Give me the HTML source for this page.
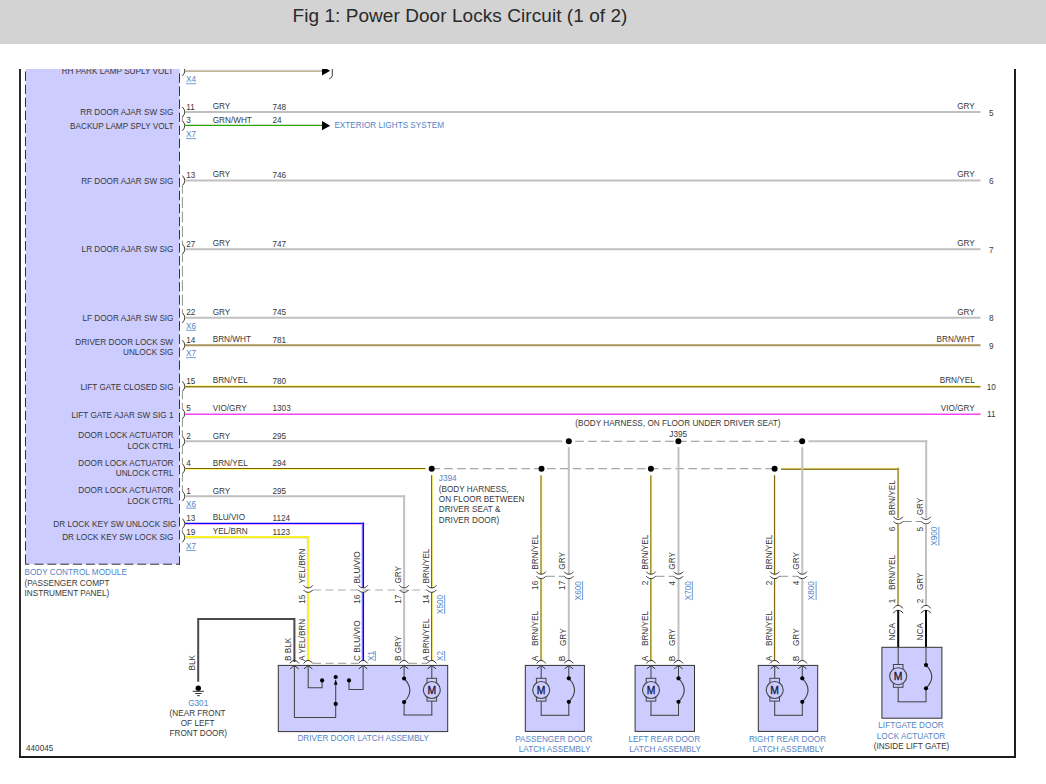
<!DOCTYPE html>
<html lang="en"><head><meta charset="utf-8">
<title>Fig 1: Power Door Locks Circuit (1 of 2)</title>
<style>
html,body{margin:0;padding:0;background:#fff;}
body{width:1046px;height:784px;position:relative;overflow:hidden;font-family:"Liberation Sans",Arial,sans-serif;}
#hdr{position:absolute;left:0;top:0;width:1046px;height:44px;background:#d3d3d3;}
#ttl{position:absolute;left:292.5px;top:3.5px;margin:0;font-weight:normal;font-size:19px;line-height:24px;color:#2a2a2a;white-space:nowrap;letter-spacing:0.06px;}
svg{position:absolute;left:0;top:0;}
svg text{font-family:"Liberation Sans",Arial,sans-serif;}
</style></head>
<body>
<div id="hdr"><h1 id="ttl">Fig 1: Power Door Locks Circuit (1 of 2)</h1></div>
<svg width="1046" height="784" viewBox="0 0 1046 784">
<defs><clipPath id="clipTop"><rect x="0" y="69" width="1046" height="715"/></clipPath></defs>
<g clip-path="url(#clipTop)">
<line x1="20.00" y1="69.00" x2="20.00" y2="758.00" stroke="#2a2a2a" stroke-width="2"/>
<line x1="1015.00" y1="69.00" x2="1015.00" y2="758.00" stroke="#1e1e1e" stroke-width="2"/>
<line x1="19.00" y1="757.00" x2="1016.00" y2="757.00" stroke="#1e1e1e" stroke-width="2"/>
<rect x="25.8" y="60" width="153.9" height="504.3" fill="#ccccff"/>
<line x1="25.50" y1="71.50" x2="25.50" y2="564.70" stroke="#333" stroke-width="1" stroke-dasharray="9.4 3.65"/>
<line x1="179.50" y1="73.40" x2="179.50" y2="564.70" stroke="#333" stroke-width="1" stroke-dasharray="9.4 3.65"/>
<line x1="25.00" y1="564.20" x2="29.10" y2="564.20" stroke="#333" stroke-width="1"/>
<line x1="34.50" y1="564.20" x2="180.00" y2="564.20" stroke="#333" stroke-width="1" stroke-dasharray="8.9 3.96"/>
<text x="173.50" y="115.10" text-anchor="end" fill="#383838" font-size="8.2">RR DOOR AJAR SW SIG</text>
<path d="M182.4,107.00 Q187.2,112.00 182.4,117.00" stroke="#3a3a3a" stroke-width="1" fill="none"/>
<text x="186.30" y="109.50" text-anchor="start" fill="#383838" font-size="8.2">11</text>
<text x="212.70" y="108.80" text-anchor="start" fill="#383838" font-size="8.2">GRY</text>
<text x="272.50" y="109.60" text-anchor="start" fill="#383838" font-size="8.2">748</text>
<text x="173.50" y="128.82" text-anchor="end" fill="#383838" font-size="8.2">BACKUP LAMP SPLY VOLT</text>
<path d="M182.4,120.72 Q187.2,125.72 182.4,130.72" stroke="#3a3a3a" stroke-width="1" fill="none"/>
<text x="186.30" y="123.22" text-anchor="start" fill="#383838" font-size="8.2">3</text>
<text x="212.70" y="122.52" text-anchor="start" fill="#383838" font-size="8.2">GRN/WHT</text>
<text x="272.50" y="123.32" text-anchor="start" fill="#383838" font-size="8.2">24</text>
<text x="173.50" y="183.70" text-anchor="end" fill="#383838" font-size="8.2">RF DOOR AJAR SW SIG</text>
<path d="M182.4,175.60 Q187.2,180.60 182.4,185.60" stroke="#3a3a3a" stroke-width="1" fill="none"/>
<text x="186.30" y="178.10" text-anchor="start" fill="#383838" font-size="8.2">13</text>
<text x="212.70" y="177.40" text-anchor="start" fill="#383838" font-size="8.2">GRY</text>
<text x="272.50" y="178.20" text-anchor="start" fill="#383838" font-size="8.2">746</text>
<text x="173.50" y="252.30" text-anchor="end" fill="#383838" font-size="8.2">LR DOOR AJAR SW SIG</text>
<path d="M182.4,244.20 Q187.2,249.20 182.4,254.20" stroke="#3a3a3a" stroke-width="1" fill="none"/>
<text x="186.30" y="246.70" text-anchor="start" fill="#383838" font-size="8.2">27</text>
<text x="212.70" y="246.00" text-anchor="start" fill="#383838" font-size="8.2">GRY</text>
<text x="272.50" y="246.80" text-anchor="start" fill="#383838" font-size="8.2">747</text>
<text x="173.50" y="320.90" text-anchor="end" fill="#383838" font-size="8.2">LF DOOR AJAR SW SIG</text>
<path d="M182.4,312.80 Q187.2,317.80 182.4,322.80" stroke="#3a3a3a" stroke-width="1" fill="none"/>
<text x="186.30" y="315.30" text-anchor="start" fill="#383838" font-size="8.2">22</text>
<text x="212.70" y="314.60" text-anchor="start" fill="#383838" font-size="8.2">GRY</text>
<text x="272.50" y="315.40" text-anchor="start" fill="#383838" font-size="8.2">745</text>
<text x="173.10" y="344.84" text-anchor="end" fill="#383838" font-size="8.2">DRIVER DOOR LOCK SW</text>
<text x="173.50" y="354.94" text-anchor="end" fill="#383838" font-size="8.2">UNLOCK SIG</text>
<path d="M182.4,340.24 Q187.2,345.24 182.4,350.24" stroke="#3a3a3a" stroke-width="1" fill="none"/>
<text x="186.30" y="342.74" text-anchor="start" fill="#383838" font-size="8.2">14</text>
<text x="212.70" y="342.04" text-anchor="start" fill="#383838" font-size="8.2">BRN/WHT</text>
<text x="272.50" y="342.84" text-anchor="start" fill="#383838" font-size="8.2">781</text>
<text x="173.50" y="389.50" text-anchor="end" fill="#383838" font-size="8.2">LIFT GATE CLOSED SIG</text>
<path d="M182.4,381.40 Q187.2,386.40 182.4,391.40" stroke="#3a3a3a" stroke-width="1" fill="none"/>
<text x="186.30" y="383.90" text-anchor="start" fill="#383838" font-size="8.2">15</text>
<text x="212.70" y="383.20" text-anchor="start" fill="#383838" font-size="8.2">BRN/YEL</text>
<text x="272.50" y="384.00" text-anchor="start" fill="#383838" font-size="8.2">780</text>
<text x="173.50" y="417.84" text-anchor="end" fill="#383838" font-size="8.2">LIFT GATE AJAR SW SIG 1</text>
<path d="M182.4,408.84 Q187.2,413.84 182.4,418.84" stroke="#3a3a3a" stroke-width="1" fill="none"/>
<text x="186.30" y="411.34" text-anchor="start" fill="#383838" font-size="8.2">5</text>
<text x="212.70" y="410.64" text-anchor="start" fill="#383838" font-size="8.2">VIO/GRY</text>
<text x="272.50" y="411.44" text-anchor="start" fill="#383838" font-size="8.2">1303</text>
<text x="173.50" y="438.28" text-anchor="end" fill="#383838" font-size="8.2">DOOR LOCK ACTUATOR</text>
<text x="173.50" y="448.68" text-anchor="end" fill="#383838" font-size="8.2">LOCK CTRL</text>
<path d="M182.4,436.28 Q187.2,441.28 182.4,446.28" stroke="#3a3a3a" stroke-width="1" fill="none"/>
<text x="186.30" y="438.78" text-anchor="start" fill="#383838" font-size="8.2">2</text>
<text x="212.70" y="438.78" text-anchor="start" fill="#383838" font-size="8.2">GRY</text>
<text x="272.50" y="438.88" text-anchor="start" fill="#383838" font-size="8.2">295</text>
<text x="173.50" y="465.72" text-anchor="end" fill="#383838" font-size="8.2">DOOR LOCK ACTUATOR</text>
<text x="173.50" y="476.12" text-anchor="end" fill="#383838" font-size="8.2">UNLOCK CTRL</text>
<path d="M182.4,463.72 Q187.2,468.72 182.4,473.72" stroke="#3a3a3a" stroke-width="1" fill="none"/>
<text x="186.30" y="466.22" text-anchor="start" fill="#383838" font-size="8.2">4</text>
<text x="212.70" y="465.52" text-anchor="start" fill="#383838" font-size="8.2">BRN/YEL</text>
<text x="272.50" y="466.32" text-anchor="start" fill="#383838" font-size="8.2">294</text>
<text x="173.50" y="493.16" text-anchor="end" fill="#383838" font-size="8.2">DOOR LOCK ACTUATOR</text>
<text x="173.50" y="503.56" text-anchor="end" fill="#383838" font-size="8.2">LOCK CTRL</text>
<path d="M182.4,491.16 Q187.2,496.16 182.4,501.16" stroke="#3a3a3a" stroke-width="1" fill="none"/>
<text x="186.30" y="493.66" text-anchor="start" fill="#383838" font-size="8.2">1</text>
<text x="212.70" y="493.66" text-anchor="start" fill="#383838" font-size="8.2">GRY</text>
<text x="272.50" y="493.76" text-anchor="start" fill="#383838" font-size="8.2">295</text>
<text x="176.50" y="526.70" text-anchor="end" fill="#383838" font-size="8.2">DR LOCK KEY SW UNLOCK SIG</text>
<path d="M182.4,518.60 Q187.2,523.60 182.4,528.60" stroke="#3a3a3a" stroke-width="1" fill="none"/>
<text x="186.30" y="521.10" text-anchor="start" fill="#383838" font-size="8.2">13</text>
<text x="212.70" y="520.40" text-anchor="start" fill="#383838" font-size="8.2">BLU/VIO</text>
<text x="272.50" y="521.20" text-anchor="start" fill="#383838" font-size="8.2">1124</text>
<text x="173.50" y="540.42" text-anchor="end" fill="#383838" font-size="8.2">DR LOCK KEY SW LOCK SIG</text>
<path d="M182.4,532.32 Q187.2,537.32 182.4,542.32" stroke="#3a3a3a" stroke-width="1" fill="none"/>
<text x="186.30" y="534.82" text-anchor="start" fill="#383838" font-size="8.2">19</text>
<text x="212.70" y="534.12" text-anchor="start" fill="#383838" font-size="8.2">YEL/BRN</text>
<text x="272.50" y="534.92" text-anchor="start" fill="#383838" font-size="8.2">1123</text>
<text x="173.30" y="73.94" text-anchor="end" fill="#383838" font-size="8.2">RH PARK LAMP SUPLY VOLT</text>
<path d="M182.4,65.84 Q187.2,70.84 182.4,75.84" stroke="#3a3a3a" stroke-width="1" fill="none"/>
<line x1="185.00" y1="70.34" x2="323.00" y2="70.34" stroke="#c9c9c9" stroke-width="1.0"/>
<line x1="185.00" y1="71.34" x2="323.00" y2="71.34" stroke="#b9a57e" stroke-width="1.0"/>
<polygon points="322,66.24 330.2,70.84 322,75.44" fill="#000"/>
<path d="M332.3,67.84 L332.3,75.84 Q332,77.84 329.3,78.84" stroke="#3a3a3a" stroke-width="1" fill="none"/>
<line x1="182.40" y1="185.60" x2="182.40" y2="244.20" stroke="#777" stroke-width="0.8" stroke-dasharray="11 3.5" stroke-dashoffset="3"/>
<line x1="182.40" y1="254.20" x2="182.40" y2="312.80" stroke="#777" stroke-width="0.8" stroke-dasharray="11 3.5" stroke-dashoffset="3"/>
<line x1="182.40" y1="391.40" x2="182.40" y2="408.84" stroke="#777" stroke-width="0.8" stroke-dasharray="11 3.5" stroke-dashoffset="3"/>
<line x1="182.40" y1="418.84" x2="182.40" y2="436.28" stroke="#777" stroke-width="0.8" stroke-dasharray="11 3.5" stroke-dashoffset="3"/>
<line x1="182.40" y1="446.28" x2="182.40" y2="463.72" stroke="#777" stroke-width="0.8" stroke-dasharray="11 3.5" stroke-dashoffset="3"/>
<line x1="182.40" y1="473.72" x2="182.40" y2="491.16" stroke="#777" stroke-width="0.8" stroke-dasharray="11 3.5" stroke-dashoffset="3"/>
<line x1="182.40" y1="117.00" x2="182.40" y2="120.72" stroke="#777" stroke-width="0.8" stroke-dasharray="11 3.5" stroke-dashoffset="3"/>
<line x1="182.40" y1="528.60" x2="182.40" y2="532.32" stroke="#777" stroke-width="0.8" stroke-dasharray="11 3.5" stroke-dashoffset="3"/>
<text x="186.00" y="82.14" text-anchor="start" fill="#5584c6" font-size="8.2">X4</text>
<line x1="186.00" y1="83.74" x2="196.03" y2="83.74" stroke="#6a9fd8" stroke-width="1"/>
<text x="186.00" y="137.02" text-anchor="start" fill="#5584c6" font-size="8.2">X7</text>
<line x1="186.00" y1="138.62" x2="196.03" y2="138.62" stroke="#6a9fd8" stroke-width="1"/>
<text x="186.00" y="328.70" text-anchor="start" fill="#5584c6" font-size="8.2">X6</text>
<line x1="186.00" y1="330.30" x2="196.03" y2="330.30" stroke="#6a9fd8" stroke-width="1"/>
<text x="186.00" y="356.04" text-anchor="start" fill="#5584c6" font-size="8.2">X7</text>
<line x1="186.00" y1="357.64" x2="196.03" y2="357.64" stroke="#6a9fd8" stroke-width="1"/>
<text x="186.00" y="506.56" text-anchor="start" fill="#5584c6" font-size="8.2">X6</text>
<line x1="186.00" y1="508.16" x2="196.03" y2="508.16" stroke="#6a9fd8" stroke-width="1"/>
<text x="186.00" y="548.82" text-anchor="start" fill="#5584c6" font-size="8.2">X7</text>
<line x1="186.00" y1="550.42" x2="196.03" y2="550.42" stroke="#6a9fd8" stroke-width="1"/>
<line x1="185.00" y1="112.00" x2="980.50" y2="112.00" stroke="#c0c0c0" stroke-width="2"/>
<text x="974.80" y="108.80" text-anchor="end" fill="#383838" font-size="8.2">GRY</text>
<text x="991.30" y="115.60" text-anchor="middle" fill="#383838" font-size="8.2">5</text>
<line x1="185.00" y1="180.60" x2="980.50" y2="180.60" stroke="#c0c0c0" stroke-width="2"/>
<text x="974.80" y="177.40" text-anchor="end" fill="#383838" font-size="8.2">GRY</text>
<text x="991.30" y="184.20" text-anchor="middle" fill="#383838" font-size="8.2">6</text>
<line x1="185.00" y1="249.20" x2="980.50" y2="249.20" stroke="#c0c0c0" stroke-width="2"/>
<text x="974.80" y="246.00" text-anchor="end" fill="#383838" font-size="8.2">GRY</text>
<text x="991.30" y="252.80" text-anchor="middle" fill="#383838" font-size="8.2">7</text>
<line x1="185.00" y1="317.80" x2="980.50" y2="317.80" stroke="#c0c0c0" stroke-width="2"/>
<text x="974.80" y="314.60" text-anchor="end" fill="#383838" font-size="8.2">GRY</text>
<text x="991.30" y="321.40" text-anchor="middle" fill="#383838" font-size="8.2">8</text>
<line x1="185.00" y1="345.24" x2="980.50" y2="345.24" stroke="#a8945a" stroke-width="2"/>
<text x="974.80" y="342.04" text-anchor="end" fill="#383838" font-size="8.2">BRN/WHT</text>
<text x="991.30" y="348.84" text-anchor="middle" fill="#383838" font-size="8.2">9</text>
<line x1="185.00" y1="385.50" x2="980.50" y2="385.50" stroke="#ffff90" stroke-width="1.0"/>
<line x1="185.00" y1="386.70" x2="980.50" y2="386.70" stroke="#967c20" stroke-width="1.4"/>
<text x="974.80" y="383.20" text-anchor="end" fill="#383838" font-size="8.2">BRN/YEL</text>
<text x="991.30" y="390.00" text-anchor="middle" fill="#383838" font-size="8.2">10</text>
<line x1="185.00" y1="413.39" x2="980.50" y2="413.39" stroke="#e3c3e3" stroke-width="1.0"/>
<line x1="185.00" y1="414.44" x2="980.50" y2="414.44" stroke="#ff3cff" stroke-width="1.15"/>
<text x="974.80" y="410.64" text-anchor="end" fill="#383838" font-size="8.2">VIO/GRY</text>
<text x="991.30" y="417.44" text-anchor="middle" fill="#383838" font-size="8.2">11</text>
<line x1="185.00" y1="125.42" x2="323.00" y2="125.42" stroke="#2aa506" stroke-width="1.4"/>
<polygon points="322,121.12 330.2,125.72 322,130.32" fill="#000"/>
<text x="334.40" y="128.42" text-anchor="start" fill="#5584c6" font-size="8.2">EXTERIOR LIGHTS SYSTEM</text>
<text x="24.50" y="575.00" text-anchor="start" fill="#5584c6" font-size="8.2">BODY CONTROL MODULE</text>
<text x="24.50" y="586.00" text-anchor="start" fill="#383838" font-size="8.2">(PASSENGER COMPT</text>
<text x="24.50" y="595.80" text-anchor="start" fill="#383838" font-size="8.2">INSTRUMENT PANEL)</text>
<text x="26.00" y="750.60" text-anchor="start" fill="#383838" font-size="8.2">440045</text>
<line x1="185.00" y1="441.28" x2="562.30" y2="441.28" stroke="#c0c0c0" stroke-width="2"/>
<line x1="575.20" y1="441.28" x2="802.20" y2="441.28" stroke="#8c8c8c" stroke-width="0.95" stroke-dasharray="8.6 4.25"/>
<line x1="808.50" y1="441.28" x2="927.20" y2="441.28" stroke="#c0c0c0" stroke-width="2"/>
<line x1="926.20" y1="440.28" x2="926.20" y2="518.00" stroke="#c0c0c0" stroke-width="2"/>
<line x1="185.00" y1="469.52" x2="425.50" y2="469.52" stroke="#ffff80" stroke-width="1.0"/>
<line x1="185.00" y1="468.52" x2="425.50" y2="468.52" stroke="#855f00" stroke-width="1.15"/>
<line x1="431.40" y1="468.72" x2="774.60" y2="468.72" stroke="#8c8c8c" stroke-width="0.95" stroke-dasharray="8.6 4.25"/>
<line x1="781.00" y1="468.12" x2="899.40" y2="468.12" stroke="#ffff90" stroke-width="1.0"/>
<line x1="781.00" y1="469.32" x2="899.40" y2="469.32" stroke="#967c20" stroke-width="1.4"/>
<line x1="899.20" y1="467.72" x2="899.20" y2="518.00" stroke="#ffffb0" stroke-width="0.9"/>
<line x1="898.10" y1="467.72" x2="898.10" y2="518.00" stroke="#a8923c" stroke-width="1.6"/>
<line x1="185.00" y1="496.16" x2="405.10" y2="496.16" stroke="#c0c0c0" stroke-width="2"/>
<line x1="404.10" y1="495.16" x2="404.10" y2="587.90" stroke="#c0c0c0" stroke-width="2"/>
<line x1="185.00" y1="524.35" x2="364.10" y2="524.35" stroke="#ff80ff" stroke-width="0.8"/>
<line x1="185.00" y1="523.35" x2="364.10" y2="523.35" stroke="#0404ff" stroke-width="1.4"/>
<line x1="362.15" y1="522.60" x2="362.15" y2="587.90" stroke="#c07cff" stroke-width="0.9"/>
<line x1="363.30" y1="522.60" x2="363.30" y2="587.90" stroke="#0404ff" stroke-width="1.5"/>
<line x1="185.00" y1="538.27" x2="309.20" y2="538.27" stroke="#d4ccc0" stroke-width="0.6"/>
<line x1="185.00" y1="537.02" x2="309.20" y2="537.02" stroke="#f6f028" stroke-width="2"/>
<line x1="307.15" y1="536.32" x2="307.15" y2="587.90" stroke="#d4ccc0" stroke-width="0.5"/>
<line x1="308.20" y1="536.32" x2="308.20" y2="587.90" stroke="#f6f028" stroke-width="2"/>
<line x1="432.60" y1="475.20" x2="432.60" y2="587.90" stroke="#ffff80" stroke-width="1.0"/>
<line x1="431.60" y1="475.20" x2="431.60" y2="587.90" stroke="#86640a" stroke-width="1.15"/>
<circle cx="568.80" cy="441.28" r="3.0" fill="#000" stroke="none" stroke-width="1"/>
<circle cx="678.40" cy="441.28" r="3.0" fill="#000" stroke="none" stroke-width="1"/>
<circle cx="802.20" cy="441.28" r="3.0" fill="#000" stroke="none" stroke-width="1"/>
<circle cx="431.70" cy="468.72" r="3.0" fill="#000" stroke="none" stroke-width="1"/>
<circle cx="541.50" cy="468.72" r="3.0" fill="#000" stroke="none" stroke-width="1"/>
<circle cx="650.90" cy="468.72" r="3.0" fill="#000" stroke="none" stroke-width="1"/>
<circle cx="774.60" cy="468.72" r="3.0" fill="#000" stroke="none" stroke-width="1"/>
<text x="575.20" y="426.00" text-anchor="start" fill="#383838" font-size="8.2">(BODY HARNESS, ON FLOOR UNDER DRIVER SEAT)</text>
<text x="669.30" y="436.90" text-anchor="start" fill="#383838" font-size="8.2">J395</text>
<text x="438.80" y="480.50" text-anchor="start" fill="#5584c6" font-size="8.2">J394</text>
<text x="438.80" y="491.80" text-anchor="start" fill="#383838" font-size="8.2">(BODY HARNESS,</text>
<text x="438.80" y="502.05" text-anchor="start" fill="#383838" font-size="8.2">ON FLOOR BETWEEN</text>
<text x="438.80" y="512.30" text-anchor="start" fill="#383838" font-size="8.2">DRIVER SEAT &amp;</text>
<text x="438.80" y="522.55" text-anchor="start" fill="#383838" font-size="8.2">DRIVER DOOR)</text>
<line x1="313.20" y1="590.00" x2="427.00" y2="590.00" stroke="#c6c6c6" stroke-width="1.5" stroke-dasharray="7.8 4.6"/>
<line x1="307.15" y1="592.20" x2="307.15" y2="661.00" stroke="#d4ccc0" stroke-width="0.5"/>
<line x1="308.20" y1="592.20" x2="308.20" y2="661.00" stroke="#f6f028" stroke-width="2"/>
<path d="M303.50,585.30 C306.00,588.77 310.40,588.77 312.90,585.30" stroke="#333" stroke-width="1" fill="none"/>
<path d="M303.50,589.90 C306.00,593.10 310.40,593.10 312.90,589.90" stroke="#333" stroke-width="1" fill="none"/>
<text x="305.10" y="583.60" text-anchor="start" fill="#383838" font-size="8.2" transform="rotate(-90 305.10 583.60)">YEL/BRN</text>
<text x="305.10" y="594.70" text-anchor="end" fill="#383838" font-size="8.2" transform="rotate(-90 305.10 594.70)">15</text>
<text x="305.10" y="661.00" text-anchor="start" fill="#383838" font-size="8.2" transform="rotate(-90 305.10 661.00)">A YEL/BRN</text>
<line x1="362.15" y1="592.20" x2="362.15" y2="661.00" stroke="#c07cff" stroke-width="0.9"/>
<line x1="363.30" y1="592.20" x2="363.30" y2="661.00" stroke="#0404ff" stroke-width="1.5"/>
<path d="M358.40,585.30 C360.90,588.77 365.30,588.77 367.80,585.30" stroke="#333" stroke-width="1" fill="none"/>
<path d="M358.40,589.90 C360.90,593.10 365.30,593.10 367.80,589.90" stroke="#333" stroke-width="1" fill="none"/>
<text x="360.00" y="583.60" text-anchor="start" fill="#383838" font-size="8.2" transform="rotate(-90 360.00 583.60)">BLU/VIO</text>
<text x="360.00" y="594.70" text-anchor="end" fill="#383838" font-size="8.2" transform="rotate(-90 360.00 594.70)">16</text>
<text x="360.00" y="661.00" text-anchor="start" fill="#383838" font-size="8.2" transform="rotate(-90 360.00 661.00)">C BLU/VIO</text>
<line x1="404.10" y1="592.20" x2="404.10" y2="661.00" stroke="#c0c0c0" stroke-width="2"/>
<path d="M399.40,585.30 C401.90,588.77 406.30,588.77 408.80,585.30" stroke="#333" stroke-width="1" fill="none"/>
<path d="M399.40,589.90 C401.90,593.10 406.30,593.10 408.80,589.90" stroke="#333" stroke-width="1" fill="none"/>
<text x="401.00" y="583.60" text-anchor="start" fill="#383838" font-size="8.2" transform="rotate(-90 401.00 583.60)">GRY</text>
<text x="401.00" y="594.70" text-anchor="end" fill="#383838" font-size="8.2" transform="rotate(-90 401.00 594.70)">17</text>
<text x="401.00" y="661.00" text-anchor="start" fill="#383838" font-size="8.2" transform="rotate(-90 401.00 661.00)">B GRY</text>
<line x1="432.60" y1="592.20" x2="432.60" y2="661.00" stroke="#ffff80" stroke-width="1.0"/>
<line x1="431.60" y1="592.20" x2="431.60" y2="661.00" stroke="#86640a" stroke-width="1.15"/>
<path d="M427.10,585.30 C429.60,588.77 434.00,588.77 436.50,585.30" stroke="#333" stroke-width="1" fill="none"/>
<path d="M427.10,589.90 C429.60,593.10 434.00,593.10 436.50,589.90" stroke="#333" stroke-width="1" fill="none"/>
<text x="428.70" y="583.60" text-anchor="start" fill="#383838" font-size="8.2" transform="rotate(-90 428.70 583.60)">BRN/YEL</text>
<text x="428.70" y="594.70" text-anchor="end" fill="#383838" font-size="8.2" transform="rotate(-90 428.70 594.70)">14</text>
<text x="428.70" y="661.00" text-anchor="start" fill="#383838" font-size="8.2" transform="rotate(-90 428.70 661.00)">A BRN/YEL</text>
<text x="443.10" y="614.00" text-anchor="start" fill="#5584c6" font-size="8.2" transform="rotate(-90 443.10 614.00)">X500</text>
<line x1="443.10" y1="615.60" x2="462.25" y2="615.60" stroke="#6a9fd8" stroke-width="1" transform="rotate(-90 443.10 614.00)"/>
<text x="373.70" y="661.00" text-anchor="start" fill="#5584c6" font-size="8.2" transform="rotate(-90 373.70 661.00)">X1</text>
<line x1="373.70" y1="662.60" x2="383.73" y2="662.60" stroke="#6a9fd8" stroke-width="1" transform="rotate(-90 373.70 661.00)"/>
<text x="443.10" y="661.00" text-anchor="start" fill="#5584c6" font-size="8.2" transform="rotate(-90 443.10 661.00)">X2</text>
<line x1="443.10" y1="662.60" x2="453.13" y2="662.60" stroke="#6a9fd8" stroke-width="1" transform="rotate(-90 443.10 661.00)"/>
<path d="M198.2,681.8 L198.2,618.9 L294.4,618.9 L294.4,662" stroke="#4a4a4a" stroke-width="2" fill="none"/>
<text x="195.00" y="670.40" text-anchor="start" fill="#383838" font-size="8.2" transform="rotate(-90 195.00 670.40)">BLK</text>
<text x="291.30" y="661.00" text-anchor="start" fill="#383838" font-size="8.2" transform="rotate(-90 291.30 661.00)">B BLK</text>
<circle cx="198.30" cy="688.20" r="2.7" fill="#000" stroke="none" stroke-width="1"/>
<line x1="192.70" y1="691.30" x2="203.90" y2="691.30" stroke="#333" stroke-width="1"/>
<line x1="195.20" y1="693.50" x2="201.60" y2="693.50" stroke="#333" stroke-width="1"/>
<line x1="197.00" y1="695.70" x2="199.80" y2="695.70" stroke="#333" stroke-width="1"/>
<text x="198.20" y="705.80" text-anchor="middle" fill="#5584c6" font-size="8.2">G301</text>
<text x="197.60" y="715.50" text-anchor="middle" fill="#383838" font-size="8.2">(NEAR FRONT</text>
<text x="197.60" y="725.50" text-anchor="middle" fill="#383838" font-size="8.2">OF LEFT</text>
<text x="198.30" y="735.50" text-anchor="middle" fill="#383838" font-size="8.2">FRONT DOOR)</text>
<rect x="278.30" y="665.40" width="169.40" height="66.20" fill="#ccccff" stroke="#333" stroke-width="1"/>
<line x1="313.00" y1="663.30" x2="358.00" y2="663.30" stroke="#999" stroke-width="1" stroke-dasharray="8 4.6"/>
<line x1="409.00" y1="663.30" x2="427.00" y2="663.30" stroke="#999" stroke-width="1" stroke-dasharray="8 4.6"/>
<path d="M289.80,663.40 Q294.40,657.20 299.00,663.40" stroke="#333" stroke-width="1" fill="none"/>
<path d="M290.20,668.80 L294.40,665.60 L298.60,668.80" stroke="#333" stroke-width="1" fill="none"/>
<path d="M303.60,663.40 Q308.20,657.20 312.80,663.40" stroke="#333" stroke-width="1" fill="none"/>
<path d="M304.00,668.80 L308.20,665.60 L312.40,668.80" stroke="#333" stroke-width="1" fill="none"/>
<path d="M358.50,663.40 Q363.10,657.20 367.70,663.40" stroke="#333" stroke-width="1" fill="none"/>
<path d="M358.90,668.80 L363.10,665.60 L367.30,668.80" stroke="#333" stroke-width="1" fill="none"/>
<path d="M399.50,663.40 Q404.10,657.20 408.70,663.40" stroke="#333" stroke-width="1" fill="none"/>
<path d="M399.90,668.80 L404.10,665.60 L408.30,668.80" stroke="#333" stroke-width="1" fill="none"/>
<path d="M427.20,663.40 Q431.80,657.20 436.40,663.40" stroke="#333" stroke-width="1" fill="none"/>
<path d="M427.60,668.80 L431.80,665.60 L436.00,668.80" stroke="#333" stroke-width="1" fill="none"/>
<path d="M294.4,665.4 L294.4,717.5 L335.7,717.5 L335.7,684.5" stroke="#444" stroke-width="1.05" fill="none"/>
<path d="M308.2,665.4 L308.2,687.8 L322.1,687.8 L322.1,680.5" stroke="#444" stroke-width="1.05" fill="none"/>
<path d="M363.1,665.4 L363.1,689.4 L349.0,689.4 L349.0,680.5" stroke="#444" stroke-width="1.05" fill="none"/>
<circle cx="322.10" cy="680.40" r="2.1" fill="#000" stroke="none" stroke-width="1"/>
<circle cx="349.00" cy="680.40" r="2.1" fill="#000" stroke="none" stroke-width="1"/>
<circle cx="335.70" cy="677.00" r="2.1" fill="#000" stroke="none" stroke-width="1"/>
<circle cx="335.70" cy="703.90" r="2.1" fill="#000" stroke="none" stroke-width="1"/>
<polygon points="335.7,679.3 337.5,684.8 333.9,684.8" fill="#000"/>
<line x1="404.10" y1="665.40" x2="404.10" y2="678.50" stroke="#444" stroke-width="1.05"/>
<line x1="404.10" y1="702.10" x2="404.10" y2="715.00" stroke="#444" stroke-width="1.05"/>
<path d="M404.10,678.50 Q415.60,690.30 404.10,702.10" stroke="#444" stroke-width="1.1" fill="none"/>
<circle cx="404.10" cy="678.50" r="2.1" fill="#000" stroke="none" stroke-width="1"/>
<circle cx="404.10" cy="702.10" r="2.1" fill="#000" stroke="none" stroke-width="1"/>
<line x1="403.50" y1="715.00" x2="432.40" y2="715.00" stroke="#444" stroke-width="1.05"/>
<line x1="431.80" y1="665.40" x2="431.80" y2="678.30" stroke="#444" stroke-width="1.05"/>
<line x1="431.80" y1="701.10" x2="431.80" y2="715.00" stroke="#444" stroke-width="1.05"/>
<rect x="427.00" y="678.30" width="9.6" height="4.5" fill="#ccccff" stroke="#444" stroke-width="1"/>
<rect x="427.00" y="696.90" width="9.6" height="4.2" fill="#ccccff" stroke="#444" stroke-width="1"/>
<circle cx="431.80" cy="690.00" r="8.5" fill="#ccccff" stroke="#444" stroke-width="1.1"/>
<text x="431.80" y="693.70" text-anchor="middle" fill="#14143c" font-size="10.4" stroke="#14143c" stroke-width="0.3">M</text>
<text x="363.20" y="740.80" text-anchor="middle" fill="#5584c6" font-size="8.2">DRIVER DOOR LATCH ASSEMBLY</text>
<line x1="542.10" y1="475.20" x2="542.10" y2="574.20" stroke="#ffffb0" stroke-width="0.9"/>
<line x1="541.00" y1="475.20" x2="541.00" y2="574.20" stroke="#a8923c" stroke-width="1.6"/>
<line x1="568.80" y1="447.20" x2="568.80" y2="574.20" stroke="#c0c0c0" stroke-width="2"/>
<line x1="542.10" y1="578.50" x2="542.10" y2="661.00" stroke="#ffffb0" stroke-width="0.9"/>
<line x1="541.00" y1="578.50" x2="541.00" y2="661.00" stroke="#a8923c" stroke-width="1.6"/>
<line x1="568.80" y1="578.50" x2="568.80" y2="661.00" stroke="#c0c0c0" stroke-width="2"/>
<line x1="545.90" y1="576.30" x2="564.10" y2="576.30" stroke="#777" stroke-width="0.8" stroke-dasharray="8.8 4.1"/>
<path d="M536.50,571.60 C539.00,575.07 543.40,575.07 545.90,571.60" stroke="#333" stroke-width="1" fill="none"/>
<path d="M536.50,576.20 C539.00,579.40 543.40,579.40 545.90,576.20" stroke="#333" stroke-width="1" fill="none"/>
<path d="M564.10,571.60 C566.60,575.07 571.00,575.07 573.50,571.60" stroke="#333" stroke-width="1" fill="none"/>
<path d="M564.10,576.20 C566.60,579.40 571.00,579.40 573.50,576.20" stroke="#333" stroke-width="1" fill="none"/>
<text x="538.30" y="569.70" text-anchor="start" fill="#383838" font-size="8.2" transform="rotate(-90 538.30 569.70)">BRN/YEL</text>
<text x="565.50" y="569.70" text-anchor="start" fill="#383838" font-size="8.2" transform="rotate(-90 565.50 569.70)">GRY</text>
<text x="538.30" y="580.80" text-anchor="end" fill="#383838" font-size="8.2" transform="rotate(-90 538.30 580.80)">16</text>
<text x="565.50" y="580.80" text-anchor="end" fill="#383838" font-size="8.2" transform="rotate(-90 565.50 580.80)">17</text>
<text x="538.30" y="646.00" text-anchor="start" fill="#383838" font-size="8.2" transform="rotate(-90 538.30 646.00)">BRN/YEL</text>
<text x="565.50" y="646.00" text-anchor="start" fill="#383838" font-size="8.2" transform="rotate(-90 565.50 646.00)">GRY</text>
<text x="538.30" y="661.20" text-anchor="start" fill="#383838" font-size="8.2" transform="rotate(-90 538.30 661.20)">A</text>
<text x="565.50" y="661.20" text-anchor="start" fill="#383838" font-size="8.2" transform="rotate(-90 565.50 661.20)">B</text>
<text x="581.00" y="600.20" text-anchor="start" fill="#5584c6" font-size="8.2" transform="rotate(-90 581.00 600.20)">X600</text>
<line x1="581.00" y1="601.80" x2="600.15" y2="601.80" stroke="#6a9fd8" stroke-width="1" transform="rotate(-90 581.00 600.20)"/>
<rect x="525.30" y="665.40" width="59.10" height="66.00" fill="#ccccff" stroke="#333" stroke-width="1"/>
<path d="M536.60,663.40 Q541.20,657.20 545.80,663.40" stroke="#333" stroke-width="1" fill="none"/>
<path d="M537.00,668.80 L541.20,665.60 L545.40,668.80" stroke="#333" stroke-width="1" fill="none"/>
<path d="M564.20,663.40 Q568.80,657.20 573.40,663.40" stroke="#333" stroke-width="1" fill="none"/>
<path d="M564.60,668.80 L568.80,665.60 L573.00,668.80" stroke="#333" stroke-width="1" fill="none"/>
<line x1="541.20" y1="665.40" x2="541.20" y2="678.30" stroke="#444" stroke-width="1.05"/>
<line x1="541.20" y1="701.10" x2="541.20" y2="715.30" stroke="#444" stroke-width="1.05"/>
<rect x="536.40" y="678.30" width="9.6" height="4.5" fill="#ccccff" stroke="#444" stroke-width="1"/>
<rect x="536.40" y="696.90" width="9.6" height="4.2" fill="#ccccff" stroke="#444" stroke-width="1"/>
<circle cx="541.20" cy="690.00" r="8.5" fill="#ccccff" stroke="#444" stroke-width="1.1"/>
<text x="541.20" y="693.70" text-anchor="middle" fill="#14143c" font-size="10.4" stroke="#14143c" stroke-width="0.3">M</text>
<line x1="568.80" y1="665.40" x2="568.80" y2="678.30" stroke="#444" stroke-width="1.05"/>
<line x1="568.80" y1="701.80" x2="568.80" y2="715.30" stroke="#444" stroke-width="1.05"/>
<path d="M568.80,678.30 Q580.30,690.05 568.80,701.80" stroke="#444" stroke-width="1.1" fill="none"/>
<circle cx="568.80" cy="678.30" r="2.1" fill="#000" stroke="none" stroke-width="1"/>
<circle cx="568.80" cy="701.80" r="2.1" fill="#000" stroke="none" stroke-width="1"/>
<line x1="540.60" y1="715.30" x2="569.40" y2="715.30" stroke="#444" stroke-width="1.05"/>
<text x="553.80" y="742.00" text-anchor="middle" fill="#5584c6" font-size="8.2">PASSENGER DOOR</text>
<text x="554.60" y="751.50" text-anchor="middle" fill="#5584c6" font-size="8.2">LATCH ASSEMBLY</text>
<line x1="651.90" y1="475.20" x2="651.90" y2="574.20" stroke="#ffffb0" stroke-width="0.9"/>
<line x1="650.80" y1="475.20" x2="650.80" y2="574.20" stroke="#a8923c" stroke-width="1.6"/>
<line x1="678.50" y1="447.20" x2="678.50" y2="574.20" stroke="#c0c0c0" stroke-width="2"/>
<line x1="651.90" y1="578.50" x2="651.90" y2="661.00" stroke="#ffffb0" stroke-width="0.9"/>
<line x1="650.80" y1="578.50" x2="650.80" y2="661.00" stroke="#a8923c" stroke-width="1.6"/>
<line x1="678.50" y1="578.50" x2="678.50" y2="661.00" stroke="#c0c0c0" stroke-width="2"/>
<line x1="655.70" y1="576.30" x2="673.80" y2="576.30" stroke="#777" stroke-width="0.8" stroke-dasharray="8.8 4.1"/>
<path d="M646.30,571.60 C648.80,575.07 653.20,575.07 655.70,571.60" stroke="#333" stroke-width="1" fill="none"/>
<path d="M646.30,576.20 C648.80,579.40 653.20,579.40 655.70,576.20" stroke="#333" stroke-width="1" fill="none"/>
<path d="M673.80,571.60 C676.30,575.07 680.70,575.07 683.20,571.60" stroke="#333" stroke-width="1" fill="none"/>
<path d="M673.80,576.20 C676.30,579.40 680.70,579.40 683.20,576.20" stroke="#333" stroke-width="1" fill="none"/>
<text x="648.10" y="569.70" text-anchor="start" fill="#383838" font-size="8.2" transform="rotate(-90 648.10 569.70)">BRN/YEL</text>
<text x="675.20" y="569.70" text-anchor="start" fill="#383838" font-size="8.2" transform="rotate(-90 675.20 569.70)">GRY</text>
<text x="648.10" y="580.80" text-anchor="end" fill="#383838" font-size="8.2" transform="rotate(-90 648.10 580.80)">2</text>
<text x="675.20" y="580.80" text-anchor="end" fill="#383838" font-size="8.2" transform="rotate(-90 675.20 580.80)">4</text>
<text x="648.10" y="646.00" text-anchor="start" fill="#383838" font-size="8.2" transform="rotate(-90 648.10 646.00)">BRN/YEL</text>
<text x="675.20" y="646.00" text-anchor="start" fill="#383838" font-size="8.2" transform="rotate(-90 675.20 646.00)">GRY</text>
<text x="648.10" y="661.20" text-anchor="start" fill="#383838" font-size="8.2" transform="rotate(-90 648.10 661.20)">A</text>
<text x="675.20" y="661.20" text-anchor="start" fill="#383838" font-size="8.2" transform="rotate(-90 675.20 661.20)">B</text>
<text x="690.70" y="600.20" text-anchor="start" fill="#5584c6" font-size="8.2" transform="rotate(-90 690.70 600.20)">X700</text>
<line x1="690.70" y1="601.80" x2="709.85" y2="601.80" stroke="#6a9fd8" stroke-width="1" transform="rotate(-90 690.70 600.20)"/>
<rect x="635.10" y="665.40" width="59.40" height="66.00" fill="#ccccff" stroke="#333" stroke-width="1"/>
<path d="M646.40,663.40 Q651.00,657.20 655.60,663.40" stroke="#333" stroke-width="1" fill="none"/>
<path d="M646.80,668.80 L651.00,665.60 L655.20,668.80" stroke="#333" stroke-width="1" fill="none"/>
<path d="M673.90,663.40 Q678.50,657.20 683.10,663.40" stroke="#333" stroke-width="1" fill="none"/>
<path d="M674.30,668.80 L678.50,665.60 L682.70,668.80" stroke="#333" stroke-width="1" fill="none"/>
<line x1="651.00" y1="665.40" x2="651.00" y2="678.30" stroke="#444" stroke-width="1.05"/>
<line x1="651.00" y1="701.10" x2="651.00" y2="715.30" stroke="#444" stroke-width="1.05"/>
<rect x="646.20" y="678.30" width="9.6" height="4.5" fill="#ccccff" stroke="#444" stroke-width="1"/>
<rect x="646.20" y="696.90" width="9.6" height="4.2" fill="#ccccff" stroke="#444" stroke-width="1"/>
<circle cx="651.00" cy="690.00" r="8.5" fill="#ccccff" stroke="#444" stroke-width="1.1"/>
<text x="651.00" y="693.70" text-anchor="middle" fill="#14143c" font-size="10.4" stroke="#14143c" stroke-width="0.3">M</text>
<line x1="678.50" y1="665.40" x2="678.50" y2="678.30" stroke="#444" stroke-width="1.05"/>
<line x1="678.50" y1="701.80" x2="678.50" y2="715.30" stroke="#444" stroke-width="1.05"/>
<path d="M678.50,678.30 Q690.00,690.05 678.50,701.80" stroke="#444" stroke-width="1.1" fill="none"/>
<circle cx="678.50" cy="678.30" r="2.1" fill="#000" stroke="none" stroke-width="1"/>
<circle cx="678.50" cy="701.80" r="2.1" fill="#000" stroke="none" stroke-width="1"/>
<line x1="650.40" y1="715.30" x2="679.10" y2="715.30" stroke="#444" stroke-width="1.05"/>
<text x="664.30" y="742.00" text-anchor="middle" fill="#5584c6" font-size="8.2">LEFT REAR DOOR</text>
<text x="665.10" y="751.50" text-anchor="middle" fill="#5584c6" font-size="8.2">LATCH ASSEMBLY</text>
<line x1="775.50" y1="475.20" x2="775.50" y2="574.20" stroke="#ffff80" stroke-width="1.0"/>
<line x1="774.50" y1="475.20" x2="774.50" y2="574.20" stroke="#86640a" stroke-width="1.15"/>
<line x1="802.30" y1="447.20" x2="802.30" y2="574.20" stroke="#c0c0c0" stroke-width="2"/>
<line x1="775.50" y1="578.50" x2="775.50" y2="661.00" stroke="#ffff80" stroke-width="1.0"/>
<line x1="774.50" y1="578.50" x2="774.50" y2="661.00" stroke="#86640a" stroke-width="1.15"/>
<line x1="802.30" y1="578.50" x2="802.30" y2="661.00" stroke="#c0c0c0" stroke-width="2"/>
<line x1="779.40" y1="576.30" x2="797.60" y2="576.30" stroke="#777" stroke-width="0.8" stroke-dasharray="8.8 4.1"/>
<path d="M770.00,571.60 C772.50,575.07 776.90,575.07 779.40,571.60" stroke="#333" stroke-width="1" fill="none"/>
<path d="M770.00,576.20 C772.50,579.40 776.90,579.40 779.40,576.20" stroke="#333" stroke-width="1" fill="none"/>
<path d="M797.60,571.60 C800.10,575.07 804.50,575.07 807.00,571.60" stroke="#333" stroke-width="1" fill="none"/>
<path d="M797.60,576.20 C800.10,579.40 804.50,579.40 807.00,576.20" stroke="#333" stroke-width="1" fill="none"/>
<text x="771.80" y="569.70" text-anchor="start" fill="#383838" font-size="8.2" transform="rotate(-90 771.80 569.70)">BRN/YEL</text>
<text x="799.00" y="569.70" text-anchor="start" fill="#383838" font-size="8.2" transform="rotate(-90 799.00 569.70)">GRY</text>
<text x="771.80" y="580.80" text-anchor="end" fill="#383838" font-size="8.2" transform="rotate(-90 771.80 580.80)">2</text>
<text x="799.00" y="580.80" text-anchor="end" fill="#383838" font-size="8.2" transform="rotate(-90 799.00 580.80)">4</text>
<text x="771.80" y="646.00" text-anchor="start" fill="#383838" font-size="8.2" transform="rotate(-90 771.80 646.00)">BRN/YEL</text>
<text x="799.00" y="646.00" text-anchor="start" fill="#383838" font-size="8.2" transform="rotate(-90 799.00 646.00)">GRY</text>
<text x="771.80" y="661.20" text-anchor="start" fill="#383838" font-size="8.2" transform="rotate(-90 771.80 661.20)">A</text>
<text x="799.00" y="661.20" text-anchor="start" fill="#383838" font-size="8.2" transform="rotate(-90 799.00 661.20)">B</text>
<text x="814.50" y="600.20" text-anchor="start" fill="#5584c6" font-size="8.2" transform="rotate(-90 814.50 600.20)">X800</text>
<line x1="814.50" y1="601.80" x2="833.65" y2="601.80" stroke="#6a9fd8" stroke-width="1" transform="rotate(-90 814.50 600.20)"/>
<rect x="758.30" y="665.40" width="59.40" height="66.00" fill="#ccccff" stroke="#333" stroke-width="1"/>
<path d="M770.10,663.40 Q774.70,657.20 779.30,663.40" stroke="#333" stroke-width="1" fill="none"/>
<path d="M770.50,668.80 L774.70,665.60 L778.90,668.80" stroke="#333" stroke-width="1" fill="none"/>
<path d="M797.70,663.40 Q802.30,657.20 806.90,663.40" stroke="#333" stroke-width="1" fill="none"/>
<path d="M798.10,668.80 L802.30,665.60 L806.50,668.80" stroke="#333" stroke-width="1" fill="none"/>
<line x1="774.70" y1="665.40" x2="774.70" y2="678.30" stroke="#444" stroke-width="1.05"/>
<line x1="774.70" y1="701.10" x2="774.70" y2="715.30" stroke="#444" stroke-width="1.05"/>
<rect x="769.90" y="678.30" width="9.6" height="4.5" fill="#ccccff" stroke="#444" stroke-width="1"/>
<rect x="769.90" y="696.90" width="9.6" height="4.2" fill="#ccccff" stroke="#444" stroke-width="1"/>
<circle cx="774.70" cy="690.00" r="8.5" fill="#ccccff" stroke="#444" stroke-width="1.1"/>
<text x="774.70" y="693.70" text-anchor="middle" fill="#14143c" font-size="10.4" stroke="#14143c" stroke-width="0.3">M</text>
<line x1="802.30" y1="665.40" x2="802.30" y2="678.30" stroke="#444" stroke-width="1.05"/>
<line x1="802.30" y1="701.80" x2="802.30" y2="715.30" stroke="#444" stroke-width="1.05"/>
<path d="M802.30,678.30 Q813.80,690.05 802.30,701.80" stroke="#444" stroke-width="1.1" fill="none"/>
<circle cx="802.30" cy="678.30" r="2.1" fill="#000" stroke="none" stroke-width="1"/>
<circle cx="802.30" cy="701.80" r="2.1" fill="#000" stroke="none" stroke-width="1"/>
<line x1="774.10" y1="715.30" x2="802.90" y2="715.30" stroke="#444" stroke-width="1.05"/>
<text x="787.50" y="742.00" text-anchor="middle" fill="#5584c6" font-size="8.2">RIGHT REAR DOOR</text>
<text x="788.30" y="751.50" text-anchor="middle" fill="#5584c6" font-size="8.2">LATCH ASSEMBLY</text>
<line x1="902.90" y1="521.50" x2="921.30" y2="521.50" stroke="#777" stroke-width="0.8" stroke-dasharray="8.8 4.1"/>
<path d="M893.50,516.80 C896.00,520.27 900.40,520.27 902.90,516.80" stroke="#333" stroke-width="1" fill="none"/>
<path d="M893.50,521.40 C896.00,524.60 900.40,524.60 902.90,521.40" stroke="#333" stroke-width="1" fill="none"/>
<path d="M921.30,516.80 C923.80,520.27 928.20,520.27 930.70,516.80" stroke="#333" stroke-width="1" fill="none"/>
<path d="M921.30,521.40 C923.80,524.60 928.20,524.60 930.70,521.40" stroke="#333" stroke-width="1" fill="none"/>
<line x1="899.10" y1="523.70" x2="899.10" y2="605.80" stroke="#ffffb0" stroke-width="0.9"/>
<line x1="898.00" y1="523.70" x2="898.00" y2="605.80" stroke="#a8923c" stroke-width="1.6"/>
<line x1="926.00" y1="523.70" x2="926.00" y2="605.80" stroke="#c0c0c0" stroke-width="2"/>
<path d="M893.50,608.40 C896.00,604.40 900.40,604.40 902.90,608.40" stroke="#333" stroke-width="1" fill="none"/>
<path d="M893.30,613.20 C896.00,609.33 900.40,609.33 903.10,613.20" stroke="#333" stroke-width="1" fill="none"/>
<path d="M921.30,608.40 C923.80,604.40 928.20,604.40 930.70,608.40" stroke="#333" stroke-width="1" fill="none"/>
<path d="M921.10,613.20 C923.80,609.33 928.20,609.33 930.90,613.20" stroke="#333" stroke-width="1" fill="none"/>
<line x1="898.20" y1="610.20" x2="898.20" y2="647.30" stroke="#0a0a0a" stroke-width="2"/>
<line x1="926.00" y1="610.20" x2="926.00" y2="647.30" stroke="#0a0a0a" stroke-width="2"/>
<text x="895.30" y="515.30" text-anchor="start" fill="#383838" font-size="8.2" transform="rotate(-90 895.30 515.30)">BRN/YEL</text>
<text x="922.70" y="515.30" text-anchor="start" fill="#383838" font-size="8.2" transform="rotate(-90 922.70 515.30)">GRY</text>
<text x="895.30" y="526.80" text-anchor="end" fill="#383838" font-size="8.2" transform="rotate(-90 895.30 526.80)">6</text>
<text x="922.70" y="526.80" text-anchor="end" fill="#383838" font-size="8.2" transform="rotate(-90 922.70 526.80)">5</text>
<text x="895.30" y="590.00" text-anchor="start" fill="#383838" font-size="8.2" transform="rotate(-90 895.30 590.00)">BRN/YEL</text>
<text x="922.70" y="590.00" text-anchor="start" fill="#383838" font-size="8.2" transform="rotate(-90 922.70 590.00)">GRY</text>
<text x="895.30" y="598.60" text-anchor="end" fill="#383838" font-size="8.2" transform="rotate(-90 895.30 598.60)">1</text>
<text x="922.70" y="598.60" text-anchor="end" fill="#383838" font-size="8.2" transform="rotate(-90 922.70 598.60)">2</text>
<text x="895.30" y="640.40" text-anchor="start" fill="#383838" font-size="8.2" transform="rotate(-90 895.30 640.40)">NCA</text>
<text x="922.70" y="640.40" text-anchor="start" fill="#383838" font-size="8.2" transform="rotate(-90 922.70 640.40)">NCA</text>
<text x="937.30" y="545.80" text-anchor="start" fill="#5584c6" font-size="8.2" transform="rotate(-90 937.30 545.80)">X900</text>
<line x1="937.30" y1="547.40" x2="956.45" y2="547.40" stroke="#6a9fd8" stroke-width="1" transform="rotate(-90 937.30 545.80)"/>
<rect x="881.90" y="647.30" width="60.00" height="70.90" fill="#ccccff" stroke="#333" stroke-width="1"/>
<line x1="898.20" y1="647.30" x2="898.20" y2="664.50" stroke="#444" stroke-width="1.05"/>
<line x1="898.20" y1="687.30" x2="898.20" y2="701.80" stroke="#444" stroke-width="1.05"/>
<rect x="893.40" y="664.50" width="9.6" height="4.5" fill="#ccccff" stroke="#444" stroke-width="1"/>
<rect x="893.40" y="683.10" width="9.6" height="4.2" fill="#ccccff" stroke="#444" stroke-width="1"/>
<circle cx="898.20" cy="676.20" r="8.5" fill="#ccccff" stroke="#444" stroke-width="1.1"/>
<text x="898.20" y="679.90" text-anchor="middle" fill="#14143c" font-size="10.4" stroke="#14143c" stroke-width="0.3">M</text>
<line x1="926.00" y1="647.30" x2="926.00" y2="665.10" stroke="#444" stroke-width="1.05"/>
<line x1="926.00" y1="688.30" x2="926.00" y2="701.80" stroke="#444" stroke-width="1.05"/>
<path d="M926.00,665.10 Q937.50,676.70 926.00,688.30" stroke="#444" stroke-width="1.1" fill="none"/>
<circle cx="926.00" cy="665.10" r="2.1" fill="#000" stroke="none" stroke-width="1"/>
<circle cx="926.00" cy="688.30" r="2.1" fill="#000" stroke="none" stroke-width="1"/>
<line x1="897.60" y1="701.80" x2="926.60" y2="701.80" stroke="#444" stroke-width="1.05"/>
<text x="911.00" y="728.20" text-anchor="middle" fill="#5584c6" font-size="8.2">LIFTGATE DOOR</text>
<text x="911.00" y="738.60" text-anchor="middle" fill="#5584c6" font-size="8.2">LOCK ACTUATOR</text>
<text x="911.50" y="749.20" text-anchor="middle" fill="#383838" font-size="8.2">(INSIDE LIFT GATE)</text>
</g>
</svg>
</body></html>
